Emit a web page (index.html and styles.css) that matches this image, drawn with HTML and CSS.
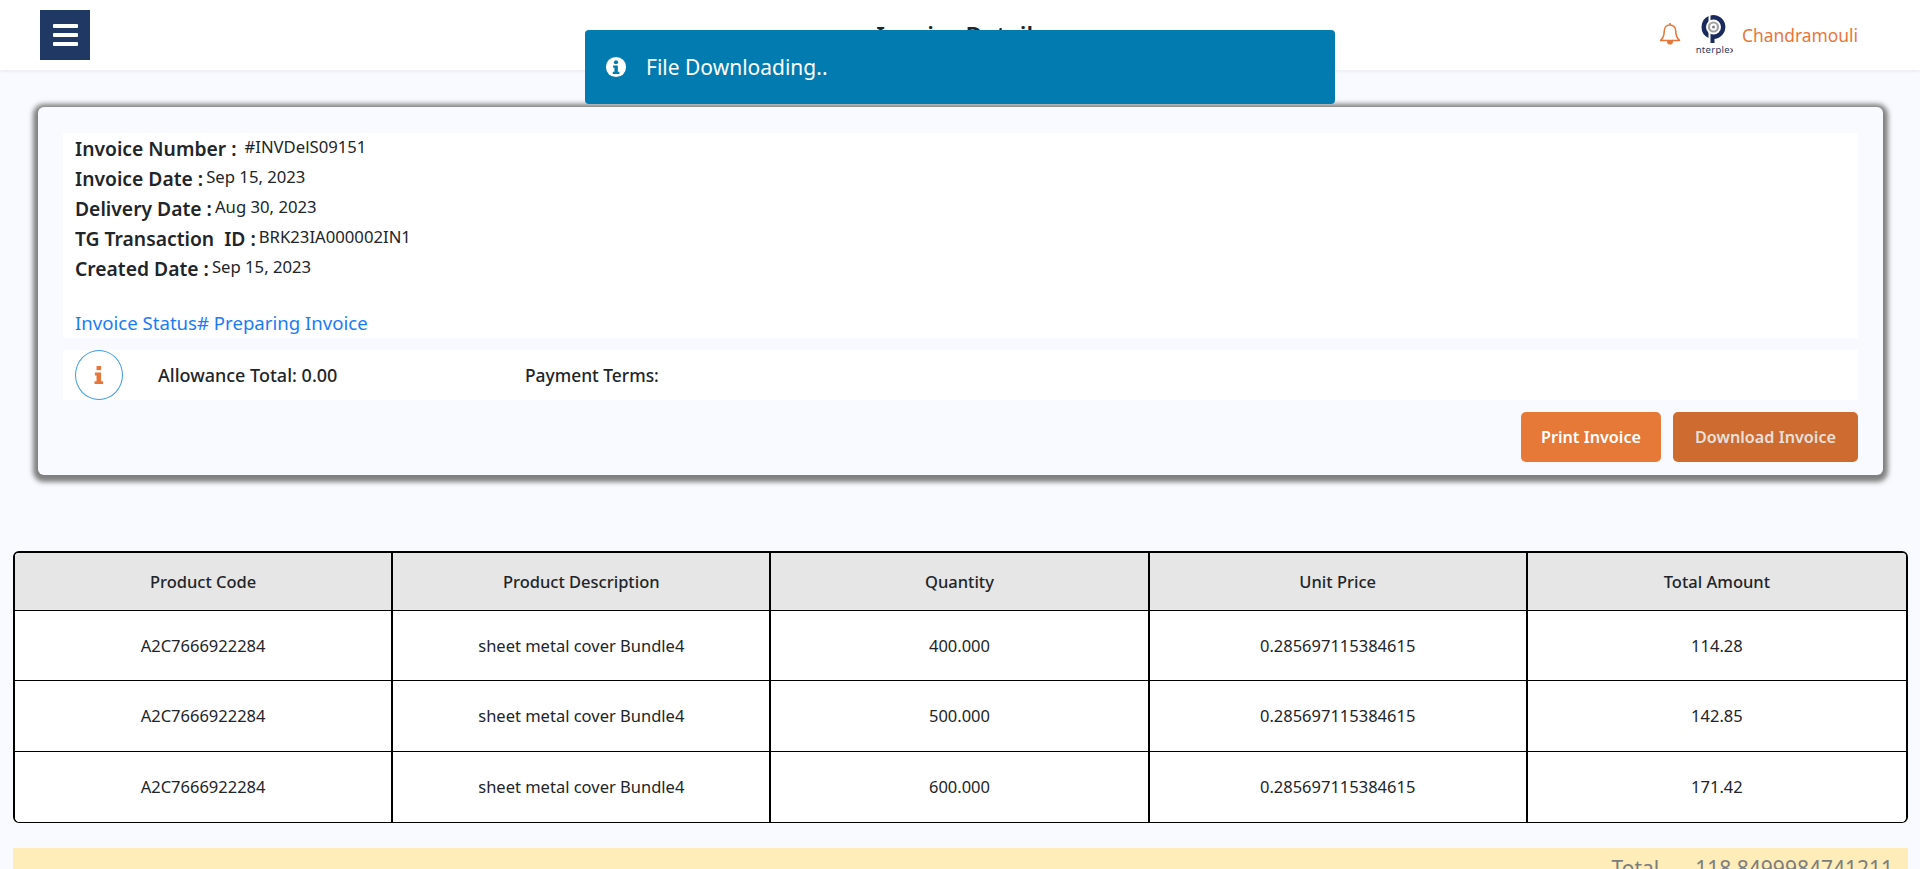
FILE: index.html
```html
<!DOCTYPE html>
<html lang="en">
<head>
    <meta charset="UTF-8">
    <meta name="viewport" content="width=device-width, initial-scale=1.0">
    <title>Invoice Details</title>
    <link rel="stylesheet" href="styles.css">
</head>
<body>
    <header class="topbar">
        <button class="menu-btn" aria-label="Menu">
            <span></span><span></span><span></span>
        </button>
        <h1 class="page-title">Invoice Details</h1>
        <div class="user-box">
            <svg class="bell" viewBox="0 0 24 26" width="22" height="24" fill="none" stroke="#e8763a" stroke-width="1.7" stroke-linejoin="round">
                <path d="M12 3.2c-4 0-6.300 3-6.300 6.800 0 4.800-1.400 7.600-4 10h20.600c-2.600-2.400-4-5.200-4-10 0-3.800-2.300-6.800-6.300-6.800z"/>
                <path d="M12 1v2.200"/>
                <path d="M9.500 20.500c0 2 1.100 3.200 2.500 3.200s2.500-1.200 2.500-3.200" fill="#e8763a"/>
            </svg>
            <svg class="logo" viewBox="0 0 38 40" width="38" height="40">
                <path d="M13.500 1.100A12 12 0 0 0 13.500 22.900z" fill="#1b2a5c"/>
                <path d="M15.500 0.400A12 12 0 1 1 19.500 24v4h-4z" fill="#1b2a5c"/>
                <circle cx="18.500" cy="12" r="7.500" fill="#fff"/>
                <circle cx="18.500" cy="12" r="4.500" fill="none" stroke="#a3a3a3" stroke-width="2.200"/>
                <circle cx="18.500" cy="12" r="1.600" fill="#8a8a8a"/>
                <text x="19" y="38" text-anchor="middle" class="logo-text">interplex</text>
            </svg>
            <span class="user-name">Chandramouli</span>
        </div>
    </header>

    <div class="toast">
        <svg viewBox="0 0 24 24" width="22" height="22">
            <circle cx="12" cy="12" r="11" fill="#fff"/>
            <circle cx="12" cy="6.800" r="2.300" fill="#027cb0"/>
            <path d="M8.800 10.300h5.200v7h1.700v2.400H8.500v-2.400h1.800v-4.600H8.800z" fill="#027cb0"/>
        </svg>
        <span>File Downloading..</span>
    </div>

    <main>
        <section class="card">
            <div class="details">
                <div class="detail-row"><b>Invoice Number :</b><span class="detail-gap">#INVDelS09151</span></div>
                <div class="detail-row"><b>Invoice Date :</b><span>Sep 15, 2023</span></div>
                <div class="detail-row"><b>Delivery Date :</b><span>Aug 30, 2023</span></div>
                <div class="detail-row"><b>TG Transaction&nbsp; ID :</b><span>BRK23IA000002IN1</span></div>
                <div class="detail-row"><b>Created Date :</b><span>Sep 15, 2023</span></div>
                <div class="status">Invoice Status# Preparing Invoice</div>
            </div>
            <div class="terms">
                <div class="info-circle">
                    <svg viewBox="0 0 12 22" width="10" height="18">
                        <rect x="3" y="0" width="5.500" height="5" fill="#e8763a"/>
                        <path d="M1 8h7.500v10.500H11V22H0.500v-3.500H3v-7H1z" fill="#e8763a"/>
                    </svg>
                </div>
                <div class="allowance">Allowance Total: 0.00</div>
                <div class="payment">Payment Terms:</div>
            </div>
            <div class="actions">
                <button class="btn btn-print">Print Invoice</button>
                <button class="btn btn-download">Download Invoice</button>
            </div>
        </section>

        <div class="table-wrap">
            <table>
                <thead>
                    <tr>
                        <th>Product Code</th>
                        <th>Product Description</th>
                        <th>Quantity</th>
                        <th>Unit Price</th>
                        <th>Total Amount</th>
                    </tr>
                </thead>
                <tbody>
                    <tr>
                        <td>A2C7666922284</td>
                        <td>sheet metal cover Bundle4</td>
                        <td>400.000</td>
                        <td>0.285697115384615</td>
                        <td>114.28</td>
                    </tr>
                    <tr>
                        <td>A2C7666922284</td>
                        <td>sheet metal cover Bundle4</td>
                        <td>500.000</td>
                        <td>0.285697115384615</td>
                        <td>142.85</td>
                    </tr>
                    <tr>
                        <td>A2C7666922284</td>
                        <td>sheet metal cover Bundle4</td>
                        <td>600.000</td>
                        <td>0.285697115384615</td>
                        <td>171.42</td>
                    </tr>
                </tbody>
            </table>
        </div>

        <div class="total-bar">
            <span>Total</span>
            <span class="total-value">118.8499984741211</span>
        </div>
    </main>
</body>
</html>
```

FILE: styles.css
```css
* {
    box-sizing: border-box;
}

body {
    font-family: "Noto Sans", "Open Sans", Arial, sans-serif;
    background-color: #f9faff;
    color: #212529;
    height: 869px;
    margin: 0;
    overflow: hidden;
}

.topbar {
    display: flex;
    align-items: flex-start;
    justify-content: space-between;
    height: 70px;
    padding: 10px 62px 0 40px;
    background-color: white;
    box-shadow: 0 1px 4px rgba(0, 0, 0, 0.08);
}

.menu-btn {
    display: flex;
    flex-direction: column;
    justify-content: center;
    gap: 5px;
    width: 50px;
    height: 50px;
    padding: 0 12.500px;
    border: none;
    background-color: #203864;
}

    .menu-btn span {
        height: 4px;
        border-radius: 1px;
        background-color: white;
    }

.page-title {
    margin: 8px 0 0 172px;
    font-size: 23.500px;
    font-weight: 600;
    line-height: 34px;
}

.user-box {
    display: flex;
    align-items: center;
    margin-top: 5px;
}

.bell {
    margin: 0 14px 3px 0;
}

.logo {
    margin-right: 9px;
}

.logo-text {
    font-size: 9.500px;
    letter-spacing: 0.3px;
    fill: #2a3763;
}

.user-name {
    color: #e8763a;
    font-size: 17.400px;
}

.toast {
    position: absolute;
    top: 30px;
    left: 585px;
    display: flex;
    align-items: center;
    gap: 19px;
    width: 750px;
    height: 74px;
    padding-left: 20px;
    border-radius: 4px;
    background-color: #027cb0;
    color: white;
    font-size: 21px;
}

.card {
    width: 1845px;
    margin: 37px 0 0 38px;
    padding: 26px 25px 13px;
    border-radius: 6px;
    background-color: #f9faff;
    box-shadow: 0 2px 5px 5px #7f7f7f;
}

.details {
    height: 205px;
    padding: 1px 12px 0;
    background-color: white;
}

.detail-row {
    display: flex;
    align-items: flex-start;
    gap: 3px;
    height: 30px;
    font-size: 16.700px;
    line-height: 26px;
}

    .detail-row b {
        font-size: 19.300px;
        font-weight: 600;
        line-height: 30px;
    }

.detail-gap {
    margin-left: 5px;
}

.status {
    margin-top: 25px;
    color: #1a7cf5;
    font-size: 18.600px;
    line-height: 28px;
}

.terms {
    display: flex;
    align-items: center;
    height: 50px;
    margin-top: 12px;
    padding-left: 12px;
    background-color: white;
    font-weight: 500;
}

.info-circle {
    display: flex;
    align-items: center;
    justify-content: center;
    width: 48px;
    height: 50px;
    border: 1px solid #3d9be0;
    border-radius: 50%;
}

.allowance {
    width: 367px;
    margin-left: 35px;
    font-size: 18px;
}

.payment {
    font-size: 17.400px;
}

.actions {
    display: flex;
    justify-content: flex-end;
    gap: 12px;
    margin-top: 12px;
}

.btn {
    height: 50px;
    border: none;
    border-radius: 5px;
    color: white;
    font-family: inherit;
    font-size: 16.200px;
    font-weight: 600;
}

.btn-print {
    width: 140px;
    background-color: #e67838;
}

.btn-download {
    width: 185px;
    background-color: #cd6b30;
    color: #e6e0dc;
}

.table-wrap {
    width: 1895px;
    margin: 76px 0 0 13px;
    border: 2px solid black;
    border-bottom-width: 1px;
    border-radius: 6px;
    overflow: hidden;
}

table {
    width: 100%;
    border-collapse: separate;
    border-spacing: 0;
    table-layout: fixed;
    background-color: white;
    font-size: 16.500px;
    text-align: center;
}

th {
    height: 58px;
    background-color: #e6e6e6;
    font-weight: 500;
    border-right: 2px solid black;
    border-bottom: 1px solid black;
}

td {
    height: 70.330px;
    border-right: 2px solid black;
    border-bottom: 1px solid black;
}

th:last-child,
td:last-child {
    border-right: none;
}

tbody tr:last-child td {
    border-bottom: none;
}

.total-bar {
    display: flex;
    justify-content: flex-end;
    gap: 36px;
    width: 1895px;
    height: 60px;
    margin: 25px 0 0 13px;
    padding: 4px 15px 0 0;
    background-color: #feecb9;
    color: #7d7d7d;
    font-size: 21px;
    line-height: 32px;
}
```
